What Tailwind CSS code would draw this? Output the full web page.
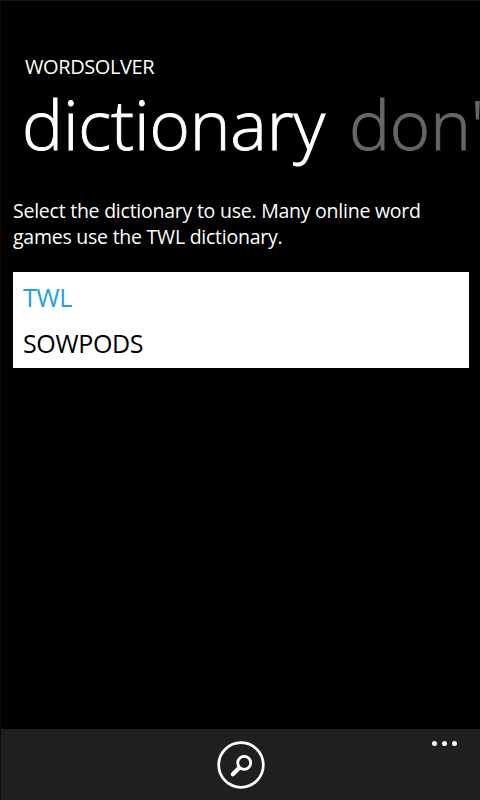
<!DOCTYPE html>
<html lang="en"><head><meta charset="utf-8"><title>WordSolver</title>
<script src="https://cdn.jsdelivr.net/npm/@tailwindcss/browser@4"></script></head>
<body class="bg-black">
<main class="flex h-[800px] w-[480px] flex-col overflow-hidden border-t border-l border-t-[#151515] border-l-[#0b0b0b] bg-black font-['Open_Sans','Noto_Sans',sans-serif] text-white">
<header class="pt-[53px] pl-6">
<p class="h-[26px] text-[20px] leading-[26px] tracking-[-0.4px] whitespace-nowrap">WORDSOLVER</p>
<h1 class="-ml-[3px] flex h-[100px] text-[69px] leading-[86px] font-light tracking-[-0.15px] whitespace-nowrap [-webkit-text-stroke:0.9px_currentColor]"><span>dictionary</span><span class="ml-[24px] text-[#666]">don'</span></h1>
</header>
<section class="pt-[18px] pl-3">
<p class="h-[74px] text-[19.5px] leading-[26px] tracking-[-0.24px] whitespace-nowrap">Select the dictionary to use. Many online word<br>games use the TWL dictionary.</p>
<ul class="h-24 w-[456px] bg-white px-[10px] py-[2px] text-[25px] leading-[46px] tracking-[-0.35px]"><li class="text-[#1ba1e2]">TWL</li><li class="text-black">SOWPODS</li></ul>
</section>
<footer class="mt-auto grid h-[71px] grid-cols-[1fr_48px_1fr] bg-[#1f1f1f] pt-3">
<button class="col-start-2 h-12 w-12" aria-label="Search"><svg class="block" width="48" height="48" fill="none" stroke="white"><circle cx="24" cy="24" r="22.3" stroke-width="2.7"/><circle cx="27.2" cy="21.8" r="6.5" stroke-width="2.8"/><path d="M22 27L15.8 33.2" stroke-width="4.2" stroke-linecap="round"/></svg></button>
<button class="mr-[21px] h-6 justify-self-end" aria-label="More"><svg class="block" width="28" height="24" fill="white"><circle cx="3.5" cy="2.5" r="2.5"/><circle cx="13.5" cy="2.5" r="2.5"/><circle cx="23.5" cy="2.5" r="2.5"/></svg></button>
</footer></main></body></html>
